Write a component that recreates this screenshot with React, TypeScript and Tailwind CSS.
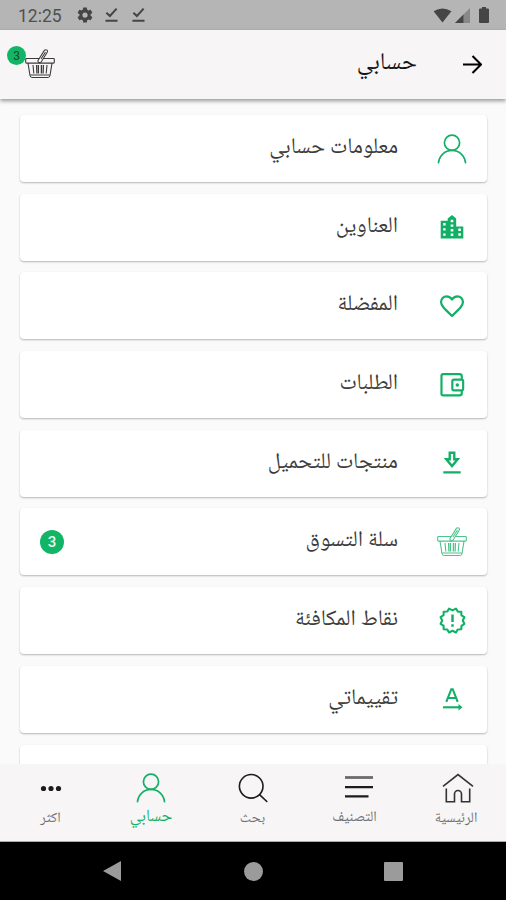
import React from 'react';

type IconProps = { className?: string };

const PersonIcon: React.FC<IconProps> = ({ className }) => (
  <svg viewBox="0 0 30 30" className={className} fill="none" stroke="currentColor" strokeWidth="1.7" strokeLinecap="round">
    <circle cx="15" cy="8.7" r="7.6" />
    <path d="M1.5 28.6C2.3 21.3 8 16.4 15 16.4S27.700 21.300 28.500 28.600" />
  </svg>
);

const BuildingIcon: React.FC<IconProps> = ({ className }) => (
  <svg viewBox="0 0 24 24" className={className} fill="currentColor">
    <path
      fillRule="evenodd"
      d="M.7 5.800h7V3.600L12 0l4.200 3.600V11.500H23.300V23.500H.7zM3.200 8h2.400v2.400H3.200zm0 5.200h2.400v2.400H3.200zm0 5.200h2.400v2.400H3.200zM10.700 4.800h2.600v2.400h-2.600zm0 4.600h2.600v2.400h-2.600zm0 4.600h2.600v2.400h-2.600zm0 4.600h2.600V21h-2.600zM18.300 13.600h2.600v2.400h-2.600zm0 4.700h2.600v2.400h-2.600z"
    />
  </svg>
);

const HeartIcon: React.FC<IconProps> = ({ className }) => (
  <svg viewBox="0 0 24 24" className={className} fill="none" stroke="currentColor" strokeWidth="1.900" strokeLinejoin="round">
    <path d="M12 20.500C6 15 2.600 12 2.600 8.500A4.700 4.700 0 0 1 7.300 3.800C9.200 3.800 11 4.900 12 6.400 13 4.900 14.800 3.800 16.700 3.800A4.700 4.700 0 0 1 21.400 8.500c0 3.500-3.400 6.500-9.400 12z" />
  </svg>
);

const WalletIcon: React.FC<IconProps> = ({ className }) => (
  <svg viewBox="0 0 24 24" className={className} fill="none" stroke="currentColor" strokeWidth="2" strokeLinejoin="round">
    <path d="M21 7V4a2 2 0 0 0-2-2H3.800A1.500 1.500 0 0 0 2.300 3.500V20A1.500 1.500 0 0 0 3.800 21.500H19a2 2 0 0 0 2-2V17" />
    <rect x="12.300" y="7" width="10" height="9.900" rx="1.500" />
    <circle cx="16.900" cy="12" r="1.600" fill="currentColor" stroke="none" />
  </svg>
);

const DownloadIcon: React.FC<IconProps> = ({ className }) => (
  <svg viewBox="0 0 24 24" className={className} fill="none" stroke="currentColor" strokeWidth="2.200">
    <path d="M9.900 2.500h4.200v6h3.200L12 14.800 6.700 8.500h3.200zM4 20.700h16" />
  </svg>
);

const BasketIcon: React.FC<IconProps> = ({ className }) => (
  <svg viewBox="0 0 30 30" className={className} fill="none" stroke="currentColor" strokeWidth="1.100">
    <rect x=".7" y="9.500" width="28.600" height="4.600" rx=".8" />
    <path d="M3 14.200 5 26.500q.4 2 2.200 2h15.600q1.800 0 2.200-2l2-12.300M5.600 26h18.800" />
    <path d="m8 16 .8 8.500M11.500 16l.3 8.500M18.500 16l-.3 8.500M22 16l-.8 8.500" />
    <path d="M13.300 16v8.500M16.500 16v8.500" strokeWidth="1.500" />
    <path d="m13 11.500 6.500-10.300q1.300-1 2.500 0 .8.900.2 2L16 13.200q-1.300.8-2.500 0-.8-.7-.5-1.700zM16 10l4.500-7" fill="white" />
  </svg>
);

const RewardIcon: React.FC<IconProps> = ({ className }) => (
  <svg viewBox="0 0 26 26" className={className} fill="none" stroke="currentColor" strokeWidth="2">
    <path
      d="M13 3.200 16.300 1.600 18.200 4.500 21.500 4.600 21.600 8 24.500 9.700 22.900 13 24.500 16.300 21.600 18.200 21.500 21.500 18 21.600 16.300 24.500 13 22.900 9.700 24.500 7.800 21.600 4.500 21.500 4.400 18 1.500 16.300 3.100 13 1.500 9.700 4.400 7.800 4.500 4.500 8 4.400 9.700 1.600z"
      strokeLinejoin="round"
    />
    <path d="M13 7.200v7.200M13 16.600v2.500" strokeWidth="2.400" />
  </svg>
);

const ReviewIcon: React.FC<IconProps> = ({ className }) => (
  <svg viewBox="0 0 24 24" className={className} fill="none" stroke="currentColor" strokeWidth="2.100">
    <path d="M6.300 14.800 11.300 2.200h1.400L17.700 14.800M8 11h8" />
    <path d="M3 20.300h17" />
    <path d="M18.500 17 22.500 20.300 18.500 23.500z" fill="currentColor" stroke="none" />
  </svg>
);

const HomeIcon: React.FC<IconProps> = ({ className }) => (
  <svg viewBox="0 0 32 32" className={className} fill="none" stroke="currentColor" strokeWidth="1.600">
    <path d="M1 14.300 16 2.500l15 11.800" />
    <path d="M4.300 16.500v13.200h8.200V22a3.500 3.500 0 0 1 7 0v7.700h8.200V16.500" />
  </svg>
);

const MenuIcon: React.FC<IconProps> = ({ className }) => (
  <svg viewBox="0 0 30 30" className={className} stroke="currentColor" strokeWidth="2.200">
    <path d="M1 4.500h28" strokeWidth="2.800" className="text-[#6c6b6b]" />
    <path d="M1 14.200h28M1 23.300h23.500" />
  </svg>
);

const SearchIcon: React.FC<IconProps> = ({ className }) => (
  <svg viewBox="0 0 30 30" className={className} fill="none" stroke="currentColor" strokeWidth="1.600" strokeLinecap="round">
    <circle cx="13.200" cy="13.300" r="11.800" />
    <path d="m21.800 21.800 7 6.700" />
  </svg>
);

const DotsIcon: React.FC<IconProps> = ({ className }) => (
  <svg viewBox="0 0 30 30" className={className} fill="currentColor">
    <circle cx="7.500" cy="15.500" r="2.600" />
    <circle cx="15" cy="15.500" r="2.600" />
    <circle cx="22.500" cy="15.500" r="2.600" />
  </svg>
);

const DoneIcon: React.FC<IconProps> = ({ className }) => (
  <svg viewBox="0 0 14 16" className={className} fill="none" stroke="currentColor" strokeWidth="2.200">
    <path d="m1.500 5.500 3.800 3.600L12.500 1.200M.5 14.300h13" />
  </svg>
);

const menuItems = [
  { label: 'معلومات حسابي', icon: <PersonIcon className="size-[30px]" /> },
  { label: 'العناوين', icon: <BuildingIcon className="size-6" /> },
  { label: 'المفضلة', icon: <HeartIcon className="size-[28px]" /> },
  { label: 'الطلبات', icon: <WalletIcon className="size-[26px]" /> },
  { label: 'منتجات للتحميل', icon: <DownloadIcon className="size-[26px]" /> },
  { label: 'سلة التسوق', icon: <BasketIcon className="size-[30px] opacity-75" />, count: 3 },
  { label: 'نقاط المكافئة', icon: <RewardIcon className="size-[27px]" /> },
  { label: 'تقييماتي', icon: <ReviewIcon className="size-6" /> },
];

const tabs = [
  { label: 'الرئيسية', icon: <HomeIcon className="size-8 text-[#333]" />, width: 'w-[97px]', text: 'mt-2 mr-[3px] text-[14.400px] text-[#707070]' },
  { label: 'التصنيف', icon: <MenuIcon className="size-[30px]" />, width: 'w-[101px]', text: 'mt-[7px] mr-2 text-[14.600px] text-[#707070]' },
  { label: 'بحث', icon: <SearchIcon className="size-[30px]" />, width: 'w-[111px]', text: 'mt-2 text-[14.400px] text-[#707070]' },
  { label: 'حسابي', icon: <PersonIcon className="size-[30px]" />, width: 'w-[92px]', text: 'mt-[5px] text-[17px]', active: true },
  { label: 'اكثر', icon: <DotsIcon className="size-[30px]" />, width: 'w-[109px]', text: 'mt-2 text-[14.400px] text-[#707070]' },
];

const StatusBar: React.FC = () => (
  <div dir="ltr" className="flex h-[30px] shrink-0 items-center bg-[#b5b5b5] pl-[18px] pr-[17px] text-[#454545]">
    <span className="w-[58px] pt-[3px] font-[Roboto] text-[17.500px] leading-none text-[#505050]">12:25</span>
    <svg viewBox="0 0 24 24" className="size-[18px]" fill="currentColor">
      <path
        fillRule="evenodd"
        d="M19.400 13c.1-.7.100-1.300 0-2l2.200-1.700c.2-.1.200-.4.100-.6l-2-3.500c-.1-.2-.4-.3-.6-.2l-2.500 1c-.5-.4-1.100-.7-1.700-1L14.500 2.400c0-.2-.3-.4-.5-.4h-4c-.2 0-.5.200-.5.400L9.100 5c-.6.300-1.200.6-1.700 1l-2.500-1c-.2-.1-.5 0-.6.200l-2 3.500c-.1.200-.1.500.1.600L4.600 11c-.1.700-.1 1.300 0 2l-2.200 1.700c-.2.100-.2.400-.1.600l2 3.500c.1.200.4.300.6.200l2.500-1c.5.400 1.100.7 1.700 1l.4 2.600c0 .2.300.4.500.4h4c.2 0 .5-.2.500-.4l.4-2.600c.6-.3 1.200-.6 1.700-1l2.500 1c.2.100.5 0 .6-.2l2-3.500c.1-.2.100-.5-.1-.6zM12 8.500a3.500 3.500 0 1 0 0 7 3.500 3.500 0 0 0 0-7z"
      />
    </svg>
    <DoneIcon className="ml-[11px] h-4 w-[13px]" />
    <DoneIcon className="ml-[14px] h-4 w-[13px]" />
    <svg viewBox="0 0 20 16" className="ml-auto h-[15px] w-[19px]" fill="currentColor">
      <path d="M.5 3.500Q10-2.500 19.500 3.500L10 15.500z" />
    </svg>
    <svg viewBox="0 0 16 16" className="ml-[3px] h-[15px] w-[15px]" fill="currentColor">
      <path d="M0 16 16 0v16z" className="opacity-40" />
      <path d="M0 16 9 7v9z" />
    </svg>
    <svg viewBox="0 0 10 16" className="ml-[9px] h-4 w-[10px]" fill="currentColor">
      <path d="M3 0h4v1.500h2q1 0 1 1V15q0 1-1 1H1q-1 0-1-1V2.500q0-1 1-1h2z" />
    </svg>
  </div>
);

const Header: React.FC = () => (
  <header className="z-10 flex h-[69px] shrink-0 items-center bg-[#f7f5f6] pr-6 pb-px pl-[25px] shadow-[0_2px_4px_rgba(0,0,0,0.4)]">
    <svg viewBox="0 0 20 20" className="size-[19px]" fill="none" stroke="black" strokeWidth="2.200">
      <path d="M0 10h18.500M10 1l9 9-9 9" />
    </svg>
    <h1 className="mr-[46px] text-[24px] leading-none text-[#161616]">حسابي</h1>
    <div className="relative mr-auto">
      <BasketIcon className="size-[30px] text-[#3c3c3c]" />
      <span className="absolute top-[-3px] -left-[18px] flex size-[19px] items-center justify-center rounded-full bg-[#12b566] font-[Roboto] text-[12px] text-[#174a30]">
        3
      </span>
    </div>
  </header>
);

const App: React.FC = () => {
  return (
    <div
      dir="rtl"
      className="flex h-[900px] w-[506px] flex-col overflow-hidden bg-[#fafafa] font-['Noto_Naskh_Arabic','Noto_Sans_Arabic','DejaVu_Sans',sans-serif]"
    >
      <StatusBar />
      <Header />

      <main className="flex min-h-0 flex-1 flex-col gap-[11.700px] overflow-hidden pt-4 pr-[19px] pl-5">
        {menuItems.map((item) => (
          <div
            key={item.label}
            className="flex h-[67px] shrink-0 items-center rounded-[4px] bg-white pl-5 shadow-[0_1px_2px_rgba(0,0,0,0.28)]"
          >
            <div className="flex w-[70px] justify-center text-[#12b066]">{item.icon}</div>
            <span className="mr-[19px] pb-px text-[22.200px] leading-none text-[#3c3c3c]">{item.label}</span>
            {item.count && (
              <span className="mr-auto flex size-6 items-center justify-center rounded-full bg-[#12b566] font-[Roboto] text-[15px] font-medium text-[#e6f8ee]">
                {item.count}
              </span>
            )}
          </div>
        ))}
        <div className="h-[67px] shrink-0 rounded-[4px] bg-white shadow-[0_1px_2px_rgba(0,0,0,0.28)]" />
      </main>

      <nav className="flex h-[78px] shrink-0 border-b border-[#aaa] bg-[#f7f5f6]">
        {tabs.map((tab) => (
          <div
            key={tab.label}
            className={`flex shrink-0 flex-col items-center pt-2 ${tab.width} ${tab.active ? 'text-[#12b066]' : 'text-[#1c1c1c]'}`}
          >
            <div className="flex h-8 items-center">{tab.icon}</div>
            <span className={`leading-none ${tab.text}`}>{tab.label}</span>
          </div>
        ))}
      </nav>

      <div dir="ltr" className="flex h-[58px] shrink-0 items-center bg-black text-[#9b9b9b]">
        <svg viewBox="0 0 20 20" className="ml-[102px] size-5" fill="currentColor">
          <path d="M1 10 19 0v20z" />
        </svg>
        <div className="ml-[122px] size-[19px] rounded-full bg-[#9b9b9b]" />
        <div className="ml-[121px] size-[19px] rounded-[1px] bg-[#9b9b9b]" />
      </div>
    </div>
  );
};

export default App;
